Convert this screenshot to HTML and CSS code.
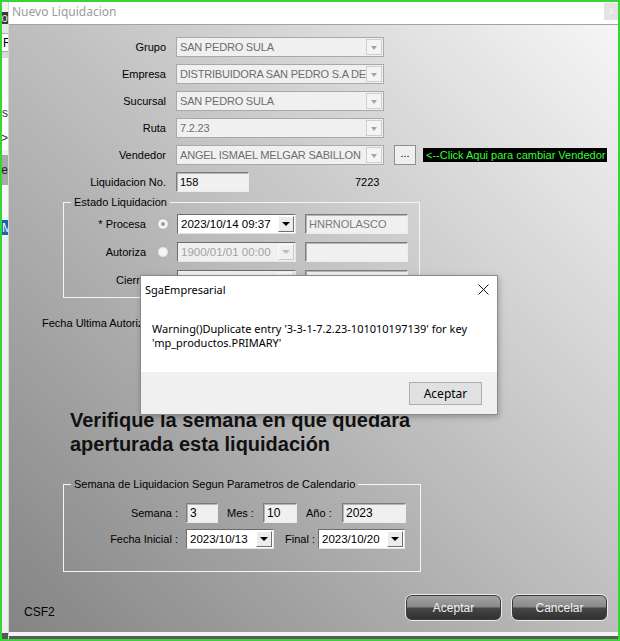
FILE: index.html
```html
<!DOCTYPE html>
<html lang="es">
<head>
    <meta charset="UTF-8">
    <title>Nuevo Liquidacion</title>
    <link rel="stylesheet" href="styles.css">
</head>
<body>
<div class="screen">
    <!-- ventana de fondo, solo se ve una franja -->
    <div class="backapp">
        <div class="ba ba-top"></div>
        <div class="ba ba-dark"><span>Esto</span></div>
        <div class="ba ba-gap"></div>
        <div class="ba ba-btn"><span>R</span></div>
        <div class="ba ba-sep"></div>
        <div class="ba ba-white"></div>
        <div class="ba ba-row"><span>es</span></div>
        <div class="ba ba-row"><span>&gt;</span></div>
        <div class="ba ba-grey"><span>ne</span></div>
        <div class="ba ba-white2"></div>
        <div class="ba ba-sel"><span>M.</span></div>
        <div class="ba ba-rest"></div>
    </div>

    <div class="window">
        <div class="titlebar">
            <span class="title">Nuevo Liquidacion</span>
            <span class="close-btn">x</span>
        </div>

        <div class="client">
            <div class="fields">
                <div class="row">
                    <label>Grupo</label>
                    <div class="combo"><span>SAN PEDRO SULA</span><i class="arrow"></i></div>
                </div>
                <div class="row">
                    <label>Empresa</label>
                    <div class="combo"><span>DISTRIBUIDORA SAN PEDRO S.A DE C.V.</span><i class="arrow"></i></div>
                </div>
                <div class="row">
                    <label>Sucursal</label>
                    <div class="combo"><span>SAN PEDRO SULA</span><i class="arrow"></i></div>
                </div>
                <div class="row">
                    <label>Ruta</label>
                    <div class="combo"><span>7.2.23</span><i class="arrow"></i></div>
                </div>
                <div class="row">
                    <label>Vendedor</label>
                    <div class="combo"><span>ANGEL ISMAEL MELGAR SABILLON</span><i class="arrow"></i></div>
                    <div class="dots-btn">...</div>
                    <div class="hint">&lt;--Click Aqui para cambiar Vendedor</div>
                </div>
                <div class="row row-liq">
                    <label>Liquidacion No.</label>
                    <div class="textbox tb-liq">158</div>
                    <span class="liq-code">7223</span>
                </div>
            </div>

            <fieldset class="group estado">
                <legend>Estado Liquidacion</legend>
                <div class="grow">
                    <label class="glabel">* Procesa</label>
                    <span class="radio checked"></span>
                    <div class="dtp dtp-wide"><span>2023/10/14 09:37</span><i class="drop"></i></div>
                    <div class="textbox tb-user muted">HNRNOLASCO</div>
                </div>
                <div class="grow">
                    <label class="glabel">Autoriza</label>
                    <span class="radio"></span>
                    <div class="dtp dtp-wide off"><span>1900/01/01 00:00</span><i class="drop"></i></div>
                    <div class="textbox tb-user"></div>
                </div>
                <div class="grow">
                    <label class="glabel">Cierre</label>
                    <span class="radio"></span>
                    <div class="dtp dtp-wide off"><span>1900/01/01 00:00</span><i class="drop"></i></div>
                    <div class="textbox tb-user"></div>
                </div>
            </fieldset>

            <div class="last-auth">Fecha Ultima Autorizacion</div>

            <h1 class="notice">Verifique la semana en que quedara<br>aperturada esta liquidación</h1>

            <fieldset class="group semana">
                <legend>Semana de Liquidacion Segun Parametros de Calendario</legend>
                <div class="srow">
                    <label class="slabel">Semana :</label>
                    <div class="textbox tb-sem">3</div>
                    <label class="ilabel">Mes :</label>
                    <div class="textbox tb-mes">10</div>
                    <label class="ilabel">Año :</label>
                    <div class="textbox tb-anio">2023</div>
                </div>
                <div class="srow">
                    <label class="slabel">Fecha Inicial :</label>
                    <div class="dtp dtp-date"><span>2023/10/13</span><i class="drop"></i></div>
                    <label class="ilabel final">Final :</label>
                    <div class="dtp dtp-date2"><span>2023/10/20</span><i class="drop"></i></div>
                </div>
            </fieldset>

            <div class="footer">
                <span class="code">CSF2</span>
                <div class="actions">
                    <button class="btn-dark">Aceptar</button>
                    <button class="btn-dark">Cancelar</button>
                </div>
            </div>
        </div>
        <div class="bottom-frame"></div>
    </div>

    <!-- cuadro de mensaje encima del formulario -->
    <div class="msgbox">
        <div class="msg-title">
            <span>SgaEmpresarial</span>
            <svg class="msg-close" width="11" height="11" viewBox="0 0 11 11">
                <path d="M0.5 0.5 L10.5 10.5 M10.5 0.5 L0.5 10.5" stroke="#111" stroke-width="1"/>
            </svg>
        </div>
        <div class="msg-body">Warning()Duplicate entry '3-3-1-7.2.23-101010197139' for key<br>'mp_productos.PRIMARY'</div>
        <div class="msg-footer">
            <button class="msg-btn">Aceptar</button>
        </div>
    </div>
</div>
</body>
</html>
```

FILE: styles.css
```css
/* ventana WinForms con mensaje de error */
* {
    box-sizing: border-box;
}

body {
    margin: 0;
    font-family: "Liberation Sans", Arial, sans-serif;
    font-size: 11px;
    color: #000;
}

.screen {
    position: relative;
    width: 620px;
    height: 641px;
    border: 2px solid #36d636;
    display: flex;
    overflow: hidden;
    background: #fff;
}

/* franja de la aplicacion de fondo */
.backapp {
    width: 7px;
    display: flex;
    flex-direction: column;
    overflow: hidden;
    background: #f0f0f0;
    border-right: 1px solid #d6d6d6;
}

.ba {
    display: flex;
    align-items: center;
    white-space: nowrap;
    font-size: 12px;
    overflow: hidden;
}

.ba-top { height: 10px; background: #f2f2f2; }
.ba-dark { height: 12px; background: #3b3b3b; color: #ddd; justify-content: flex-end; }
.ba-gap { height: 9px; background: #e6e6e6; }
.ba-btn { height: 19px; background: #fff; border-top: 1px solid #aaa; border-bottom: 1px solid #aaa; padding-left: 1px; }
.ba-sep { height: 6px; background: #d8d8d8; }
.ba-white { height: 42px; background: #fbfbfb; }
.ba-row { height: 25px; background: #fff; justify-content: flex-end; color: #333; }
.ba-grey { height: 30px; background: #a9a9a9; justify-content: flex-end; color: #222; margin-top: 5px; }
.ba-white2 { height: 35px; background: #f7f7f7; }
.ba-sel { height: 15px; background: #1565c0; color: #fff; }
.ba-rest { flex: 1; background: #efefef; border-bottom: 6px solid #555; }

/* ventana principal */
.window {
    flex: 1;
    display: flex;
    flex-direction: column;
}

.titlebar {
    height: 23px;
    background: #fff;
    border-bottom: 1px solid #a3a3a3;
    display: flex;
    align-items: center;
    justify-content: space-between;
}

.title {
    font-family: "Noto Sans", sans-serif;
    font-size: 12px;
    color: #9b9b9b;
    margin-left: 3px;
    padding-bottom: 3px;
}

.close-btn {
    width: 14px;
    height: 17px;
    align-self: flex-start;
    margin-top: 1px;
    background: #e3e3e3;
    color: #f4f4f4;
    font-size: 10px;
    text-align: center;
    line-height: 16px;
}

.client {
    flex: 1;
    display: flex;
    flex-direction: column;
    background: linear-gradient(to top right, #848484 0%, #bdbdbd 50%, #f6f6f6 100%);
}

.bottom-frame {
    height: 7px;
    background: #f3f3f3;
    border-bottom: 3px solid #5a5a5a;
}

/* filas de arriba */
.fields {
    padding-top: 12px;
}

.row {
    display: flex;
    align-items: center;
    height: 20px;
    margin-bottom: 7px;
}

.row label {
    width: 157px;
    margin-right: 10px;
    text-align: right;
}

.combo {
    width: 208px;
    height: 20px;
    display: flex;
    align-items: center;
    justify-content: space-between;
    background: #f0f0f0;
    border: 1px solid #a9a9a9;
    color: #6d6d6d;
    padding-left: 3px;
    overflow: hidden;
    letter-spacing: -0.2px;
}

.combo span {
    white-space: nowrap;
    overflow: hidden;
    flex: 1;
}

.combo .arrow {
    width: 16px;
    height: 16px;
    margin-right: 1px;
    flex-shrink: 0;
    border: 1px solid #cfcfcf;
    background: #f4f4f4;
    position: relative;
}

.combo .arrow::after {
    content: "";
    position: absolute;
    left: 4px;
    top: 6px;
    border-left: 3.5px solid transparent;
    border-right: 3.5px solid transparent;
    border-top: 4px solid #a5a5a5;
}

.dots-btn {
    width: 22px;
    height: 20px;
    margin-left: 10px;
    background: #efefef;
    border: 1px solid #8f8f8f;
    text-align: center;
    line-height: 15px;
}

.hint {
    margin-left: 7px;
    height: 14px;
    padding: 0 2px 0 3px;
    background: #000;
    color: #33ff33;
    line-height: 14px;
    white-space: nowrap;
}

.row-liq {
    margin-top: 1px;
    margin-bottom: 0;
}

.textbox {
    height: 20px;
    background: #f0f0f0;
    border: 1px solid;
    border-color: #7c7c7c #ececec #ececec #7c7c7c;
    box-shadow: inset 1px 1px 0 #b4b4b4;
    padding-left: 3px;
    line-height: 18px;
    white-space: nowrap;
}

.tb-liq { width: 73px; }

.liq-code {
    margin-left: 106px;
}

.muted { color: #7a7a7a; }

/* grupos */
.group {
    margin: 0;
    padding: 0;
    border: 1px solid #f4f4f4;
    min-width: 0;
}

.group legend {
    margin-left: 7px;
    padding: 0 3px;
    line-height: 13px;
}

.estado {
    width: 357px;
    margin: 4px 0 0 54px;
    padding: 5px 0 7px 0;
}

.grow {
    display: flex;
    align-items: center;
    height: 20px;
    margin-bottom: 8px;
}

.grow:last-child {
    margin-bottom: 0;
}

.glabel {
    width: 82px;
    text-align: right;
}

.radio {
    width: 12px;
    height: 12px;
    margin: 0 8px 0 11px;
    border-radius: 50%;
    border: 1px solid #b0b0b0;
    background: radial-gradient(circle, #f6f6f6 40%, #dcdcdc 100%);
    display: flex;
    align-items: center;
    justify-content: center;
}

.radio.checked::after {
    content: "";
    width: 4px;
    height: 4px;
    border-radius: 50%;
    background: #9c9c9c;
}

.dtp {
    height: 20px;
    display: flex;
    align-items: center;
    justify-content: space-between;
    background: #fff;
    border: 1px solid;
    border-color: #6c6c6c #e4e4e4 #e4e4e4 #6c6c6c;
    padding-left: 3px;
    font-size: 11.5px;
    white-space: nowrap;
}

.dtp .drop {
    width: 16px;
    height: 16px;
    margin-right: 1px;
    background: #ececec;
    border: 1px solid;
    border-color: #fff #6f6f6f #6f6f6f #fff;
    position: relative;
}

.dtp .drop::after {
    content: "";
    position: absolute;
    left: 3px;
    top: 5px;
    border-left: 4px solid transparent;
    border-right: 4px solid transparent;
    border-top: 4px solid #000;
}

.dtp.off {
    background: #f0f0f0;
    color: #a3a3a3;
}

.dtp.off .drop {
    border-color: #fafafa #c9c9c9 #c9c9c9 #fafafa;
    background: #f0f0f0;
}

.dtp.off .drop::after {
    border-top-color: #bdbdbd;
}

.dtp-wide { width: 119px; }

.tb-user {
    width: 103px;
    margin-left: 9px;
}

.last-auth {
    margin: 19px 0 0 33px;
}

.notice {
    margin: 79px 0 0 61px;
    font-family: "Liberation Sans", Arial, sans-serif;
    font-size: 20px;
    line-height: 24px;
    font-weight: bold;
    color: #111;
}

.semana {
    width: 358px;
    margin: 22px 0 0 54px;
    padding: 12px 0 22px 0;
}

.srow {
    display: flex;
    align-items: center;
    height: 20px;
    margin-bottom: 6px;
}

.srow:last-child {
    margin-bottom: 0;
}

.slabel {
    width: 114px;
    text-align: right;
    margin-right: 8px;
}

.ilabel {
    width: 36px;
    margin-left: 9px;
}

.ilabel.final {
    width: 33px;
    margin-left: 11px;
}

.srow .textbox {
    font-size: 12px;
}

.tb-sem { width: 32px; }
.tb-mes { width: 34px; }
.tb-anio { width: 64px; }
.dtp-date { width: 88px; }
.dtp-date2 { width: 87px; }

/* pie */
.footer {
    margin-top: auto;
    display: flex;
    align-items: flex-end;
    justify-content: space-between;
    padding: 0 10px 11px 15px;
}

.code {
    font-size: 12px;
    padding-bottom: 2px;
}

.actions {
    display: flex;
    gap: 9px;
}

.btn-dark {
    width: 97px;
    height: 27px;
    border-radius: 7px;
    border: 1px solid #e9e9e9;
    box-shadow: inset 0 0 0 1px #3a3a3a;
    background: linear-gradient(#a5a5a5 0%, #8a8a8a 46%, #454545 54%, #2f2f2f 100%);
    color: #f2f2f2;
    font-family: "Liberation Sans", Arial, sans-serif;
    font-size: 12px;
    padding: 0;
}

/* mensaje */
.msgbox {
    position: absolute;
    left: 138px;
    top: 273px;
    width: 358px;
    height: 140px;
    background: #fff;
    border: 1px solid #8a8a8a;
    box-shadow: 1px 2px 6px rgba(0, 0, 0, 0.25);
    display: flex;
    flex-direction: column;
    font-family: "Noto Sans", sans-serif;
    font-size: 11px;
}

.msg-title {
    height: 26px;
    display: flex;
    align-items: center;
    justify-content: space-between;
    padding: 0 8px 0 4px;
    font-size: 11px;
}

.msg-body {
    padding: 20px 0 0 11px;
    line-height: 14px;
    flex: 1;
}

.msg-footer {
    height: 42px;
    background: #f0f0f0;
    display: flex;
    justify-content: flex-end;
    padding: 10px 15px 0 0;
}

.msg-btn {
    width: 73px;
    height: 23px;
    background: #e1e1e1;
    border: 1px solid #adadad;
    font-family: "Noto Sans", sans-serif;
    font-size: 12px;
    padding: 0;
}
```
